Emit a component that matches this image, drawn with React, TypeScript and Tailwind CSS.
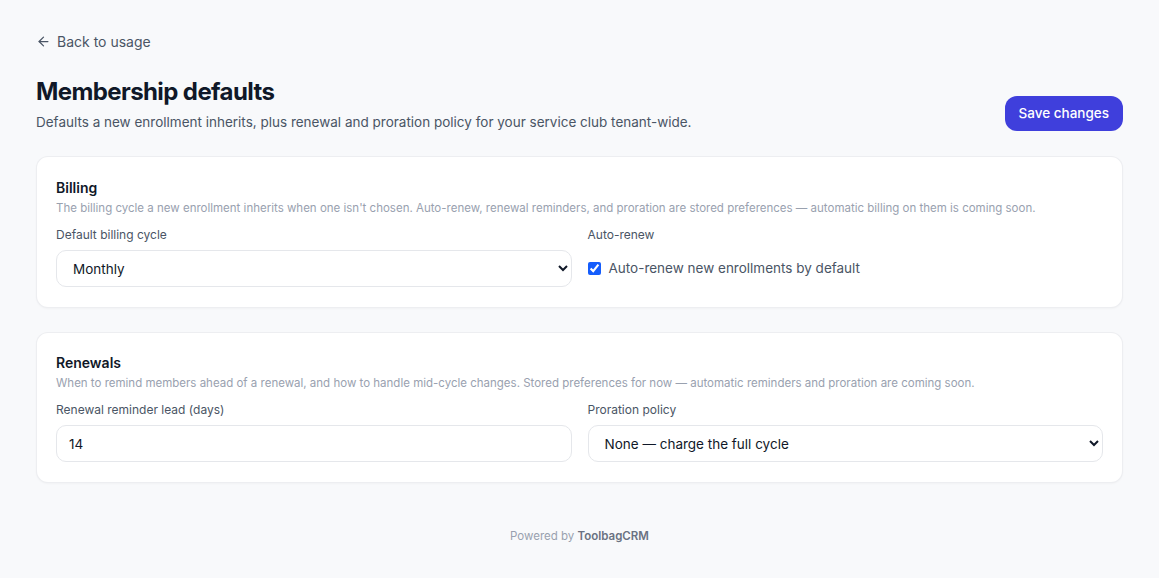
import { ArrowLeft } from 'lucide-react';

export default function App() {
  return (
    <div className="min-h-screen bg-[#f8f9fb] font-['Inter',sans-serif] text-gray-900">
      <div className="px-9 pt-[31px] pb-8">
        <a href="#" className="inline-flex items-center gap-1.5 text-sm text-gray-600">
          <ArrowLeft className="h-[15px] w-[15px]" strokeWidth={2} />
          Back to usage
        </a>

        <div className="mt-[21px] flex items-end justify-between">
          <div>
            <h1 className="text-2xl font-bold tracking-tight text-gray-900">Membership defaults</h1>
            <p className="mt-1 text-[13.5px] leading-5 text-gray-600">
              Defaults a new enrollment inherits, plus renewal and proration policy for your service club tenant-wide.
            </p>
          </div>
          <button className="mb-px h-[35px] rounded-xl bg-[#3f3fdc] px-3.5 text-[13.5px] font-medium text-white">
            Save changes
          </button>
        </div>

        {/* Billing */}
        <section className="mt-6 rounded-xl border border-gray-200/70 bg-white px-[19px] pt-[21px] pb-5 shadow-[0_1px_2px_rgba(0,0,0,0.03)]">
          <h2 className="text-sm font-semibold text-gray-900">Billing</h2>
          <p className="mt-0.5 text-[11.5px] leading-4 text-gray-400">
            The billing cycle a new enrollment inherits when one isn't chosen. Auto-renew, renewal reminders, and proration are stored preferences — automatic billing on them is coming soon.
          </p>
          <div className="mt-[11px] grid grid-cols-2 gap-4">
            <div>
              <label className="mb-[7px] block text-xs text-gray-600">Default billing cycle</label>
              <select className="h-[37px] w-full rounded-[10px] border border-gray-200 bg-white px-3 text-[13.5px] text-gray-900">
                <option>Monthly</option>
                <option>Quarterly</option>
                <option>Annually</option>
              </select>
            </div>
            <div>
              <label className="mb-[7px] block text-xs text-gray-600">Auto-renew</label>
              <label className="flex h-[37px] items-center gap-2 text-[13.5px] text-gray-600">
                <input type="checkbox" defaultChecked className="h-[13px] w-[13px] accent-blue-600" />
                Auto-renew new enrollments by default
              </label>
            </div>
          </div>
        </section>

        {/* Renewals */}
        <section className="mt-6 rounded-xl border border-gray-200/70 bg-white px-[19px] pt-5 pb-5 shadow-[0_1px_2px_rgba(0,0,0,0.03)]">
          <h2 className="text-sm font-semibold text-gray-900">Renewals</h2>
          <p className="mt-0.5 text-[11.5px] leading-4 text-gray-400">
            When to remind members ahead of a renewal, and how to handle mid-cycle changes. Stored preferences for now — automatic reminders and proration are coming soon.
          </p>
          <div className="mt-[11px] grid grid-cols-2 gap-4">
            <div>
              <label className="mb-[7px] block text-xs text-gray-600">Renewal reminder lead (days)</label>
              <input
                type="number"
                defaultValue={14}
                className="h-[37px] w-full rounded-[10px] border border-gray-200 bg-white px-3 text-[13.5px] text-gray-900"
              />
            </div>
            <div>
              <label className="mb-[7px] block text-xs text-gray-600">Proration policy</label>
              <select className="h-[37px] w-full rounded-[10px] border border-gray-200 bg-white px-3 text-[13.5px] text-gray-900">
                <option>None — charge the full cycle</option>
                <option>Prorate by day</option>
              </select>
            </div>
          </div>
        </section>

        <p className="mt-[45px] text-center text-[11.5px] text-gray-400">
          Powered by <span className="font-semibold text-gray-500">ToolbagCRM</span>
        </p>
      </div>
    </div>
  );
}
